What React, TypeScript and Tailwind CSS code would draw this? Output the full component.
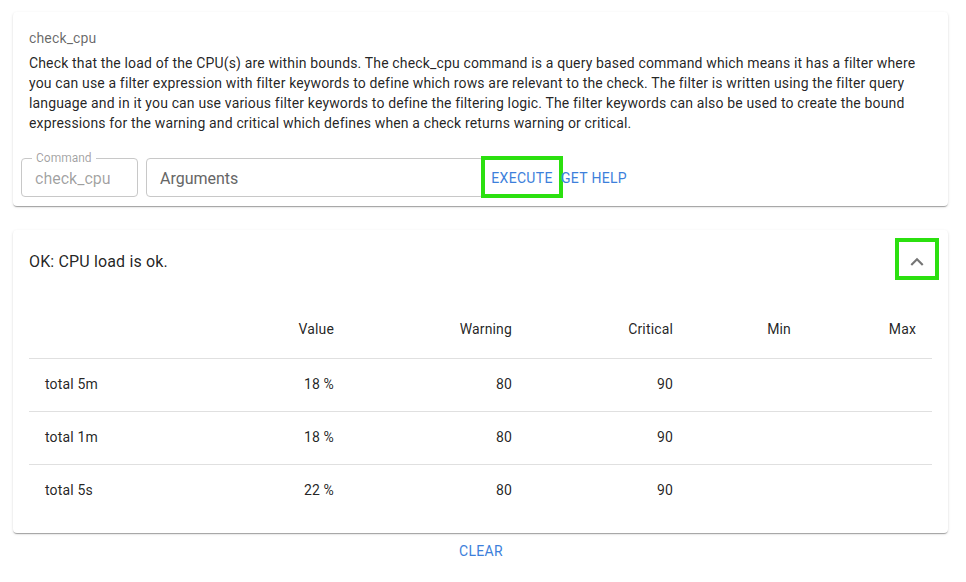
import React from 'react';

const rows = [
  { label: 'total 5m', value: '18 %', warning: '80', critical: '90' },
  { label: 'total 1m', value: '18 %', warning: '80', critical: '90' },
  { label: 'total 5s', value: '22 %', warning: '80', critical: '90' },
];

const description =
  'Check that the load of the CPU(s) are within bounds. The check_cpu command is a query based command which means it has a filter where you can use a filter expression with filter keywords to define which rows are relevant to the check. The filter is written using the filter query language and in it you can use various filter keywords to define the filtering logic. The filter keywords can also be used to create the bound expressions for the warning and critical which defines when a check returns warning or critical.';

function ExpandLess() {
  return (
    <svg className="mt-[6px]" width="26" height="26" viewBox="0 0 24 24" fill="#757575">
      <path d="M12 8l-6 6 1.41 1.41L12 10.83l4.59 4.58L18 14z" />
    </svg>
  );
}

export default function App() {
  return (
    <div className="min-h-screen bg-white pt-[12px] font-['Roboto',sans-serif] text-[rgba(0,0,0,0.87)]">
      {/* Command card */}
      <div className="ml-[13px] w-[935px] rounded-[4px] bg-white shadow-[0_2px_1px_-1px_rgba(0,0,0,0.2),0_1px_1px_0_rgba(0,0,0,0.14),0_1px_3px_0_rgba(0,0,0,0.12)]">
        <div className="px-4 pt-4">
          <div className="mb-[5px] text-[14px] leading-[20px] tracking-[0.15px] text-[rgba(0,0,0,0.6)]">check_cpu</div>
          <p className="text-[14px] leading-[20px] tracking-[0.15px]">{description}</p>
        </div>
        <div className="mt-[23px] flex items-center px-2 pb-[8px]">
          <div className="relative h-[39px] w-[117px] rounded-[4px] border border-[#c8c8c8]">
            <span className="absolute -top-[8px] left-[10px] bg-white px-[4px] text-[12px] leading-[14px] text-[rgba(0,0,0,0.38)]">
              Command
            </span>
            <div className="flex h-full items-center pl-[13px] pt-[3px] text-[16px] text-[rgba(0,0,0,0.38)]">check_cpu</div>
          </div>
          <div className="ml-2 flex h-[39px] w-[338px] items-center rounded-[4px] border border-[#c8c8c8] pl-[13px] pt-[3px] text-[16px] text-[#666]">
            Arguments
          </div>
          <button className="-ml-[3px] flex h-[42px] w-[82px] items-center justify-center border-4 border-[#2be00f] pt-[2px] text-[14px] uppercase tracking-[0.3px] text-[#3d7fdb]">
            Execute
          </button>
          <button className="-ml-[2px] pt-[2px] text-[14px] uppercase tracking-[0.3px] text-[#3d7fdb]">Get help</button>
        </div>
      </div>

      {/* Result card */}
      <div className="ml-[13px] mt-[24px] w-[935px] rounded-[4px] bg-white pb-4 pt-[8px] shadow-[0_2px_1px_-1px_rgba(0,0,0,0.2),0_1px_1px_0_rgba(0,0,0,0.14),0_1px_3px_0_rgba(0,0,0,0.12)]">
        <div className="flex h-[42px] items-center justify-between pl-4 pr-[9px]">
          <span className="pt-[6px] text-[16px] leading-[24px] tracking-[0.15px]">OK: CPU load is ok.</span>
          <button className="flex h-[42px] w-[44px] items-center justify-center border-4 border-[#2be00f]">
            <ExpandLess />
          </button>
        </div>
        <div className="mx-4 mt-[22px]">
          <table className="w-[903px] table-fixed border-collapse text-[14px] leading-[20px] tracking-[0.15px]">
            <colgroup>
              <col className="w-[171px]" />
              <col className="w-[150px]" />
              <col className="w-[178px]" />
              <col className="w-[161px]" />
              <col className="w-[118px]" />
              <col className="w-[125px]" />
            </colgroup>
            <thead>
              <tr className="border-b border-[#e0e0e0]">
                <th className="px-4 pb-[17px] pt-[15px] font-normal leading-[24px]" />
                <th className="px-4 pb-[17px] pt-[15px] text-right font-normal leading-[24px]">Value</th>
                <th className="px-4 pb-[17px] pt-[15px] text-right font-normal leading-[24px]">Warning</th>
                <th className="px-4 pb-[17px] pt-[15px] text-right font-normal leading-[24px]">Critical</th>
                <th className="px-4 pb-[17px] pt-[15px] text-right font-normal leading-[24px]">Min</th>
                <th className="px-4 pb-[17px] pt-[15px] text-right font-normal leading-[24px]">Max</th>
              </tr>
            </thead>
            <tbody>
              {rows.map((r, i) => (
                <tr key={r.label} className={i < rows.length - 1 ? 'border-b border-[#e0e0e0]' : ''}>
                  <td className="px-4 pb-[17px] pt-[15px]">{r.label}</td>
                  <td className="px-4 pb-[17px] pt-[15px] text-right">{r.value}</td>
                  <td className="px-4 pb-[17px] pt-[15px] text-right">{r.warning}</td>
                  <td className="px-4 pb-[17px] pt-[15px] text-right">{r.critical}</td>
                  <td className="px-4 pb-[17px] pt-[15px] text-right" />
                  <td className="px-4 pb-[17px] pt-[15px] text-right" />
                </tr>
              ))}
            </tbody>
          </table>
        </div>
      </div>

      <div className="mt-[6px] flex justify-center">
        <button className="mr-[4px] text-[14px] uppercase leading-[24px] tracking-[0.3px] text-[#3d7fdb]">Clear</button>
      </div>
    </div>
  );
}
